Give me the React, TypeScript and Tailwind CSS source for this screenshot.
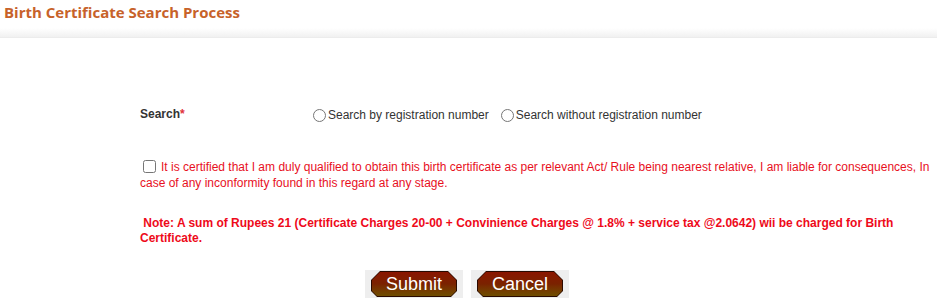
import { useState } from 'react';

const arial = { fontFamily: '"Liberation Sans", Arial, sans-serif' };

function BevelButton({ label }: { label: string }) {
  return (
    <div className="bg-[#eeeeee] px-[6px] py-[1px]">
      <button
        type="button"
        className="h-[26px] w-[86px] bg-[#2a0a00] p-[1px] [clip-path:polygon(9px_0,calc(100%-9px)_0,100%_9px,100%_calc(100%-6px),calc(100%-6px)_100%,6px_100%,0_calc(100%-6px),0_9px)]"
      >
        <span className="flex h-full w-full items-center justify-center bg-gradient-to-b from-[#8a1500] via-[#7a2200] to-[#6e4d00] pb-[1px] text-[18px] leading-none text-white [clip-path:polygon(8px_0,calc(100%-8px)_0,100%_8px,100%_calc(100%-5px),calc(100%-5px)_100%,5px_100%,0_calc(100%-5px),0_8px)]">
          {label}
        </span>
      </button>
    </div>
  );
}

export default function App() {
  const [mode, setMode] = useState('');
  const [agree, setAgree] = useState(false);

  return (
    <div className="w-[937px] h-[303px] bg-white overflow-hidden" style={arial}>
      {/* Page title */}
      <div className="h-[28px] pl-[4px] pt-[1px]">
        <h1
          className="text-[15px] font-bold text-[#c7622a]"
          style={{ fontFamily: '"Open Sans", "DejaVu Sans", sans-serif' }}
        >
          Birth Certificate Search Process
        </h1>
      </div>
      <div className="h-[10px] bg-gradient-to-b from-white to-[#f1f1f1] border-b border-[#ececec]" />

      <div className="pl-[140px] pr-[4px]">
        {/* Search type */}
        <div className="mt-[68px] grid grid-cols-[173px_1fr] items-center text-[12px] text-[#333]">
          <span className="font-bold -mt-[3px]">
            Search<span className="text-[#e0303a]">*</span>
          </span>
          <div className="flex items-center">
            <label className="flex items-center gap-[2px]">
              <input
                type="radio"
                name="mode"
                className="h-[13px] w-[13px]"
                checked={mode === 'reg'}
                onChange={() => setMode('reg')}
              />
              <span>Search by registration number</span>
            </label>
            <label className="ml-[12px] flex items-center gap-[2px]">
              <input
                type="radio"
                name="mode"
                className="h-[13px] w-[13px]"
                checked={mode === 'noreg'}
                onChange={() => setMode('noreg')}
              />
              <span>Search without registration number</span>
            </label>
          </div>
        </div>

        {/* Declaration */}
        <p className="mt-[35px] text-[12px] leading-[16px] text-[#e8101e]">
          <input
            type="checkbox"
            className="ml-[3px] mr-[5px] h-[13px] w-[13px] align-[-2px]"
            checked={agree}
            onChange={(e) => setAgree(e.target.checked)}
          />
          It is certified that I am duly qualified to obtain this birth certificate as per relevant Act/ Rule being
          nearest relative, I am liable for consequences, In case of any inconformity found in this regard at any
          stage.
        </p>

        {/* Charges note */}
        <p className="mt-[25px] text-[12px] font-bold leading-[15px] text-[#ee0a1a]">
          &nbsp;Note: A sum of Rupees 21 (Certificate Charges 20-00 + Convinience Charges @ 1.8% + service tax
          @2.0642) wii be charged for Birth Certificate.
        </p>
      </div>

      {/* Actions */}
      <div className="mt-[24px] flex justify-center gap-[8px] pr-[3px]">
        <BevelButton label="Submit" />
        <BevelButton label="Cancel" />
      </div>
    </div>
  );
}
